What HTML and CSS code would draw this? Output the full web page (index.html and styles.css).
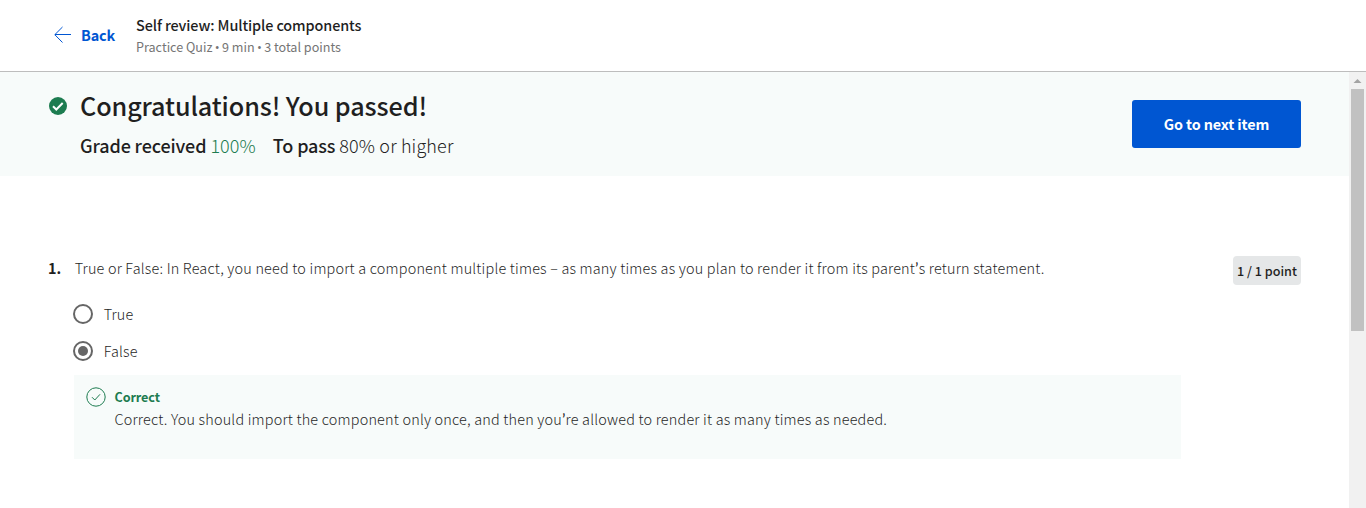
FILE: index.html
```html
<!DOCTYPE html>
<html lang="en">
<head>
<meta charset="utf-8">
<title>Self review: Multiple components</title>
<link rel="stylesheet" href="styles.css">
</head>
<body>
<header class="topbar">
  <a class="back">
    <svg class="back-arrow" width="18" height="18" viewBox="0 0 18 18" fill="none" stroke="#0056d2"><path d="M8.500 1L.8 8.700L8.500 16.500M1 8.500H17"/></svg>
    <span class="back-label">Back</span>
  </a>
  <div class="quiz-info">
    <h1 class="quiz-title">Self review: Multiple components</h1>
    <div class="quiz-meta">Practice Quiz <span class="bullet">•</span> 9 min <span class="bullet">•</span> 3 total points</div>
  </div>
</header>
<div class="viewport">
  <main class="content">
    <section class="banner">
      <svg class="passed-icon" width="18" height="18" viewBox="0 0 18 18"><circle cx="9" cy="9" r="9" fill="#1d7c50"/><path d="M4 9.300L7.300 12.500L13.700 6" fill="none" stroke="#fff" stroke-width="2"/></svg>
      <div class="result">
        <h2 class="result-title">Congratulations! You passed!</h2>
        <div class="grades">
          <div class="grade"><b class="grade-label">Grade received</b> <span class="score">100%</span></div>
          <div class="grade"><b class="pass-label">To pass</b> <span class="required">80% or higher</span></div>
        </div>
      </div>
      <button class="next">Go to next item</button>
    </section>
    <section class="question">
      <div class="number">1.</div>
      <div class="question-body">
        <p class="prompt">True or False: In React, you need to import a component multiple times – as many times as you plan to render it from its parent<span class="apostrophe">’</span>s return statement.</p>
        <div class="option"><i class="radio"></i><span>True</span></div>
        <div class="option"><i class="radio checked"></i><span>False</span></div>
        <div class="feedback">
          <svg class="feedback-icon" width="20" height="20" viewBox="0 0 20 20" fill="none" stroke="#1d7c50"><circle cx="10" cy="10" r="9.200"/><path d="M6 10.200L8.800 13L14 7.300"/></svg>
          <div class="feedback-text">
            <div class="verdict">Correct</div>
            <p class="explanation">Correct. You should import the component only once, and then you<span class="apostrophe">’</span>re allowed to render it as many times as needed.</p>
          </div>
        </div>
      </div>
      <div class="points">1 / 1 point</div>
    </section>
  </main>
  <div class="scrollbar">
    <svg class="scroll-up" width="17" height="17" viewBox="0 0 17 17"><path d="M4.500 11L8.500 7L12.500 11Z" fill="#a3a3a3"/></svg>
    <div class="thumb"></div>
  </div>
</div>
</body>
</html>
```
FILE: styles.css
```css
* { box-sizing: border-box; }
body {
  margin: 0;
  height: 508px;
  overflow: hidden;
  background: #fff;
  color: #1f1f1f;
  font-family: "Noto Sans CJK SC", "Open Sans", sans-serif;
  font-size: 14.4px;
  font-weight: 300;
  white-space: nowrap;
}
h1, h2, p { margin: 0; }
.apostrophe { font-family: Lato, sans-serif; font-weight: 400; font-size: 16px; line-height: 1; }
.bullet { font-family: "Open Sans", sans-serif; font-size: 13px; line-height: 1; margin: 0 -0.5px; }
.topbar {
  display: flex;
  height: 72px;
  padding-left: 54px;
  border-bottom: 1px solid #bdbdbd;
}
.back { display: flex; align-items: center; width: 82px; color: #0056d2; }
.back-arrow { margin: 0 9px 2px 0; }
.back-label { font-weight: 700; padding-bottom: 2px; letter-spacing: -0.1px; }
.quiz-info { padding-top: 14px; }
.quiz-title { font-size: 14.4px; line-height: 22px; font-weight: 500; letter-spacing: -0.1px; }
.quiz-meta { padding-top: 1px; font-size: 12.6px; line-height: 20px; font-weight: 400; color: #757575; }
.viewport { display: flex; height: 436px; }
.content { flex: 1; }
.banner {
  display: flex;
  height: 104px;
  padding: 0 48px 0 49px;
  background: #f7fbfa;
}
.passed-icon { margin: 25px 13px 0 0; }
.result { flex: 1; padding-top: 15px; }
.result-title { font-size: 25.2px; line-height: 36px; font-weight: 500; letter-spacing: -0.11px; }
.grades { display: flex; gap: 17px; margin-top: 8px; font-size: 18px; line-height: 28px; }
.grades b { font-weight: 500; letter-spacing: -0.13px; }
.score { color: #1d7c50; letter-spacing: 0.1px; }
.required { letter-spacing: 0.15px; }
.next {
  width: 169px;
  height: 48px;
  margin-top: 28px;
  padding: 0;
  border: 0;
  border-radius: 3px;
  background: #0056d2;
  color: #fff;
  font: 700 14.4px/24px "Noto Sans CJK SC", sans-serif;
  letter-spacing: -0.13px;
}
.question { display: flex; padding: 80px 48px 0 48px; }
.number { width: 26px; font-weight: 700; font-size: 14.4px; line-height: 24px; }
.question-body { flex: 1; }
.prompt { padding-left: 0.7px; line-height: 24px; letter-spacing: 0.2px; }
.option { display: flex; align-items: center; height: 37px; margin-left: -1px; letter-spacing: 0.15px; }
.prompt + .option { margin-top: 15px; }
.radio {
  display: flex;
  width: 20px;
  height: 20px;
  margin-right: 10.700px;
  border: 2px solid #666;
  border-radius: 50%;
}
.checked::after { content: ""; width: 10px; height: 10px; margin: 3px; border-radius: 50%; background: #666; }
.feedback {
  display: flex;
  width: 1107px;
  height: 84px;
  margin-top: 6px;
  padding: 12px 12px 0;
  background: #f7fbfa;
}
.feedback-icon { margin-right: 8.500px; }
.verdict { color: #1d7c50; font-size: 12.6px; line-height: 20px; font-weight: 700; letter-spacing: -0.1px; }
.explanation { line-height: 24px; letter-spacing: 0.2px; }
.points {
  width: 68px;
  height: 29px;
  border-radius: 4px;
  background: #e5e7e8;
  text-align: center;
  font-size: 12.6px;
  line-height: 30px;
  font-weight: 500;
}
.scrollbar { width: 17px; background: #f1f1f1; }
.scroll-up { display: block; }
.thumb { width: 13px; height: 242px; margin-left: 2px; background: #c1c1c1; }
```
